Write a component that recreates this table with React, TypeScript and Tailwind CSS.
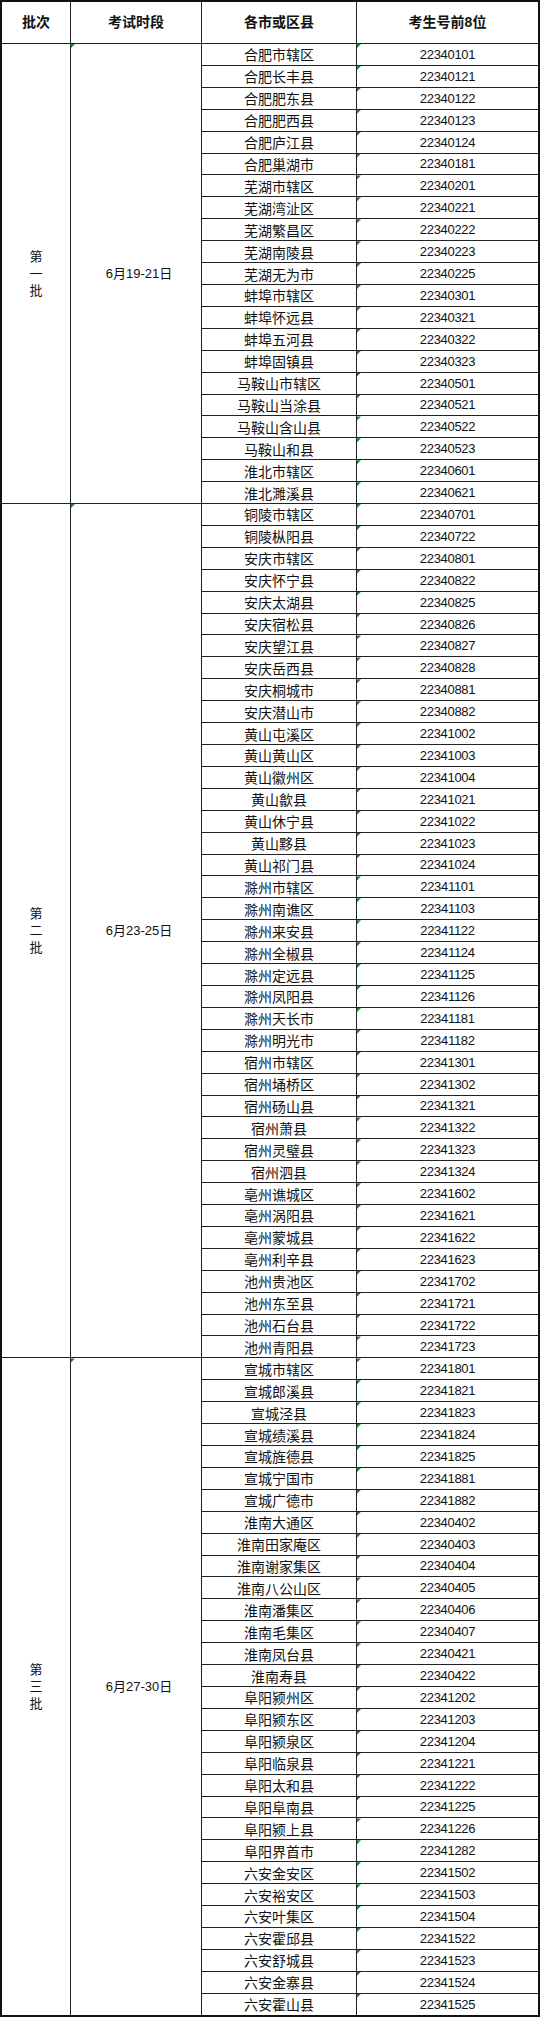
import React from "react";

type Row = [string, string];
type Batch = { label: string[]; date: string; rows: Row[] };

const batches: Batch[] = [
  {
    label: ["第", "一", "批"],
    date: "6月19-21日",
    rows: [
      ["合肥市辖区", "22340101"],
      ["合肥长丰县", "22340121"],
      ["合肥肥东县", "22340122"],
      ["合肥肥西县", "22340123"],
      ["合肥庐江县", "22340124"],
      ["合肥巢湖市", "22340181"],
      ["芜湖市辖区", "22340201"],
      ["芜湖湾沚区", "22340221"],
      ["芜湖繁昌区", "22340222"],
      ["芜湖南陵县", "22340223"],
      ["芜湖无为市", "22340225"],
      ["蚌埠市辖区", "22340301"],
      ["蚌埠怀远县", "22340321"],
      ["蚌埠五河县", "22340322"],
      ["蚌埠固镇县", "22340323"],
      ["马鞍山市辖区", "22340501"],
      ["马鞍山当涂县", "22340521"],
      ["马鞍山含山县", "22340522"],
      ["马鞍山和县", "22340523"],
      ["淮北市辖区", "22340601"],
      ["淮北濉溪县", "22340621"],
    ],
  },
  {
    label: ["第", "二", "批"],
    date: "6月23-25日",
    rows: [
      ["铜陵市辖区", "22340701"],
      ["铜陵枞阳县", "22340722"],
      ["安庆市辖区", "22340801"],
      ["安庆怀宁县", "22340822"],
      ["安庆太湖县", "22340825"],
      ["安庆宿松县", "22340826"],
      ["安庆望江县", "22340827"],
      ["安庆岳西县", "22340828"],
      ["安庆桐城市", "22340881"],
      ["安庆潜山市", "22340882"],
      ["黄山屯溪区", "22341002"],
      ["黄山黄山区", "22341003"],
      ["黄山徽州区", "22341004"],
      ["黄山歙县", "22341021"],
      ["黄山休宁县", "22341022"],
      ["黄山黟县", "22341023"],
      ["黄山祁门县", "22341024"],
      ["滁州市辖区", "22341101"],
      ["滁州南谯区", "22341103"],
      ["滁州来安县", "22341122"],
      ["滁州全椒县", "22341124"],
      ["滁州定远县", "22341125"],
      ["滁州凤阳县", "22341126"],
      ["滁州天长市", "22341181"],
      ["滁州明光市", "22341182"],
      ["宿州市辖区", "22341301"],
      ["宿州埇桥区", "22341302"],
      ["宿州砀山县", "22341321"],
      ["宿州萧县", "22341322"],
      ["宿州灵璧县", "22341323"],
      ["宿州泗县", "22341324"],
      ["亳州谯城区", "22341602"],
      ["亳州涡阳县", "22341621"],
      ["亳州蒙城县", "22341622"],
      ["亳州利辛县", "22341623"],
      ["池州贵池区", "22341702"],
      ["池州东至县", "22341721"],
      ["池州石台县", "22341722"],
      ["池州青阳县", "22341723"],
    ],
  },
  {
    label: ["第", "三", "批"],
    date: "6月27-30日",
    rows: [
      ["宣城市辖区", "22341801"],
      ["宣城郎溪县", "22341821"],
      ["宣城泾县", "22341823"],
      ["宣城绩溪县", "22341824"],
      ["宣城旌德县", "22341825"],
      ["宣城宁国市", "22341881"],
      ["宣城广德市", "22341882"],
      ["淮南大通区", "22340402"],
      ["淮南田家庵区", "22340403"],
      ["淮南谢家集区", "22340404"],
      ["淮南八公山区", "22340405"],
      ["淮南潘集区", "22340406"],
      ["淮南毛集区", "22340407"],
      ["淮南凤台县", "22340421"],
      ["淮南寿县", "22340422"],
      ["阜阳颍州区", "22341202"],
      ["阜阳颍东区", "22341203"],
      ["阜阳颍泉区", "22341204"],
      ["阜阳临泉县", "22341221"],
      ["阜阳太和县", "22341222"],
      ["阜阳阜南县", "22341225"],
      ["阜阳颍上县", "22341226"],
      ["阜阳界首市", "22341282"],
      ["六安金安区", "22341502"],
      ["六安裕安区", "22341503"],
      ["六安叶集区", "22341504"],
      ["六安霍邱县", "22341522"],
      ["六安舒城县", "22341523"],
      ["六安金寨县", "22341524"],
      ["六安霍山县", "22341525"],
    ],
  },
];

// little green "number stored as text" flag from the spreadsheet
const Flag = () => (
  <span className="absolute left-0 top-0 h-[4px] w-[4px] bg-[#1b8a1b] [clip-path:polygon(0_0,100%_0,0_100%)]" />
);

export default function App() {
  return (
    <div className="w-[540px] bg-white text-[#111] font-['Liberation_Sans','Noto_Sans_CJK_SC',sans-serif]">
      <div className="border-2 border-[#111]">
        {/* header */}
        <div className="flex h-[42px] border-b border-[#222] text-[14px] font-bold">
          <div className="flex w-[69px] items-center justify-center border-r border-[#222]">批次</div>
          <div className="flex w-[131px] items-center justify-center border-r border-[#222]">考试时段</div>
          <div className="flex w-[155px] items-center justify-center border-r border-[#222]">各市或区县</div>
          <div className="flex flex-1 items-center justify-center">考生号前8位</div>
        </div>

        {batches.map((b, bi) => {
          const lastBatch = bi === batches.length - 1;
          return (
            <div key={bi} className="flex">
              <div
                className={`flex w-[69px] flex-col items-center justify-center border-r border-[#222] text-[13px] leading-[17px] ${
                  lastBatch ? "" : "border-b"
                }`}
              >
                {b.label.map((c) => (
                  <span key={c}>{c}</span>
                ))}
              </div>
              <div
                className={`relative flex w-[131px] items-center justify-center border-r border-[#222] text-[13px] ${
                  lastBatch ? "" : "border-b"
                }`}
              >
                <Flag />
                <span className="pr-[2px] pl-[8px]">{b.date}</span>
              </div>
              <div className="flex flex-1 flex-col">
                {b.rows.map(([name, code], ri) => {
                  const lastRow = lastBatch && ri === b.rows.length - 1;
                  return (
                    <div
                      key={code}
                      className={`flex border-[#222] ${lastRow ? "h-[20.9px]" : "h-[21.91px] border-b"}`}
                    >
                      <div className="flex w-[155px] items-center justify-center border-r border-[#222] font-['Noto_Sans_CJK_SC',sans-serif] text-[14px] leading-none">
                        {name}
                      </div>
                      <div className="relative flex flex-1 items-center justify-center text-[13px] leading-none tracking-[-0.3px]">
                        <Flag />
                        {code}
                      </div>
                    </div>
                  );
                })}
              </div>
            </div>
          );
        })}
      </div>
    </div>
  );
}
